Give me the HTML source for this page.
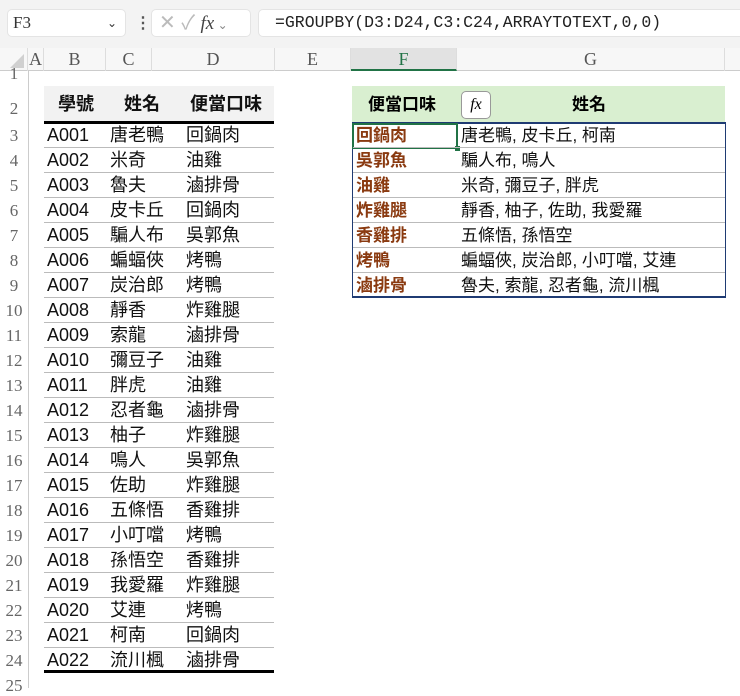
<!DOCTYPE html>
<html><head><meta charset="utf-8"><style>
*{margin:0;padding:0;box-sizing:border-box}
body{width:740px;height:688px;overflow:hidden;background:#fff;font-family:"Liberation Sans","Noto Sans CJK TC",sans-serif;position:relative}
.a{position:absolute}
.top{left:0;top:0;width:740px;height:48px;background:#f3f3f3}
.box{background:#fff;border-radius:5px;border:1px solid #e4e4e4}
.ch{top:48px;height:23px;font-family:"Liberation Serif",serif;font-size:18px;color:#555;text-align:center;line-height:23px;border-right:1px solid #ddd}
.rh{left:0;width:28px;text-align:center;font-family:"Liberation Serif",serif;font-size:17px;color:#666}
.c{font-size:18px;color:#111;white-space:nowrap;line-height:25px}
.hl{height:1px;background:#bbb}
.f{color:#8a3a10;font-weight:bold;font-size:17px;left:356px;line-height:25px}
.g{font-size:17px;left:461px;line-height:25px;color:#111;white-space:nowrap}
</style></head><body>
<div class="a top"></div>
<div class="a box" style="left:7px;top:9px;width:119px;height:28px;font-family:'Liberation Serif',serif;font-size:17px;line-height:26px;padding-left:5px;color:#333">F3<span style="position:absolute;right:8px;font-size:12px">&#8964;</span></div>
<div class="a" style="left:135px;top:13px;font-size:16px;color:#555;font-weight:bold">&#8942;</div>
<div class="a box" style="left:151px;top:9px;width:100px;height:28px;color:#bbb;font-size:20px;line-height:26px;padding-left:7px">✕ ✓ <i style="font-family:'Liberation Serif',serif;color:#444;font-size:19px">fx</i><span style="font-size:12px;color:#888"> &#8964;</span></div>
<div class="a box" style="left:258px;top:9px;width:490px;height:28px;font-family:'Liberation Mono',monospace;font-size:16.5px;line-height:26px;padding-left:16px;color:#222">=GROUPBY(D3:D24,C3:C24,ARRAYTOTEXT,0,0)</div>
<div class="a" style="left:0;top:48px;width:740px;height:23px;background:#f7f7f7;border-bottom:1px solid #ccc"></div>
<div class="a" style="left:0;top:48px;width:28px;height:23px;border-right:1px solid #ddd"><div style="position:absolute;right:3px;bottom:3px;width:0;height:0;border-left:14px solid transparent;border-bottom:14px solid #d0d0d0"></div></div>
<div class="a ch" style="left:28px;width:16px">A</div>
<div class="a ch" style="left:44px;width:62px">B</div>
<div class="a ch" style="left:106px;width:46px">C</div>
<div class="a ch" style="left:152px;width:123px">D</div>
<div class="a ch" style="left:275px;width:76px">E</div>
<div class="a ch" style="left:351px;width:106px;background:#e2e2e2;color:#217346;border-bottom:2px solid #217346">F</div>
<div class="a ch" style="left:457px;width:268px">G</div>
<div class="a" style="left:28px;top:71px;width:1px;height:617px;background:#ccc"></div>
<div class="a rh" style="top:64px">1</div>
<div class="a rh" style="top:99px">2</div>
<div id="rows"></div>
<div class="a" style="left:44px;top:86px;width:230px;height:36px;background:#f2f2f2"></div>
<div class="a c" style="left:58px;top:92px;font-weight:bold">學號</div>
<div class="a c" style="left:124px;top:92px;font-weight:bold">姓名</div>
<div class="a c" style="left:190px;top:92px;font-weight:bold">便當口味</div>
<div class="a" style="left:44px;top:121px;width:230px;height:3px;background:#000"></div>
<div class="a" style="left:44px;top:670px;width:230px;height:3px;background:#000"></div>
<div class="a" style="left:352px;top:86px;width:373px;height:37px;background:#d9efd0"></div>
<div class="a" style="left:368px;top:92px;font-size:17px;font-weight:bold;line-height:25px">便當口味</div>
<div class="a" style="left:572px;top:92px;font-size:17px;font-weight:bold;line-height:25px">姓名</div>
<div class="a" style="left:461px;top:91px;width:30px;height:28px;background:#fff;border:1px solid #999;border-radius:5px;font-family:'Liberation Serif',serif;font-style:italic;font-size:16px;text-align:center;line-height:26px">fx</div>
<div class="a" style="left:352px;top:122px;width:374px;height:176px;border:1px solid #1f3b73;border-top-width:2px;border-bottom-width:2px"></div>
<div class="a" style="left:352px;top:123px;width:106px;height:26px;border:2px solid #217346"></div>
<div class="a" style="left:455px;top:146px;width:5px;height:5px;background:#217346"></div>
<div id="r2"></div>
<script>
var d=[["A001","唐老鴨","回鍋肉"],["A002","米奇","油雞"],["A003","魯夫","滷排骨"],["A004","皮卡丘","回鍋肉"],["A005","騙人布","吳郭魚"],["A006","蝙蝠俠","烤鴨"],["A007","炭治郎","烤鴨"],["A008","靜香","炸雞腿"],["A009","索龍","滷排骨"],["A010","彌豆子","油雞"],["A011","胖虎","油雞"],["A012","忍者龜","滷排骨"],["A013","柚子","炸雞腿"],["A014","鳴人","吳郭魚"],["A015","佐助","炸雞腿"],["A016","五條悟","香雞排"],["A017","小叮噹","烤鴨"],["A018","孫悟空","香雞排"],["A019","我愛羅","炸雞腿"],["A020","艾連","烤鴨"],["A021","柯南","回鍋肉"],["A022","流川楓","滷排骨"]];
var h="";
for(var i=0;i<22;i++){var t=123+i*25;
h+='<div class="a rh" style="top:'+(t+3)+'px">'+(i+3)+'</div>';
h+='<div class="a c" style="left:47px;top:'+t+'px">'+d[i][0]+'</div><div class="a c" style="left:110px;top:'+t+'px">'+d[i][1]+'</div><div class="a c" style="left:186px;top:'+t+'px">'+d[i][2]+'</div>';
if(i<21)h+='<div class="a hl" style="left:44px;top:'+(t+24)+'px;width:230px"></div>';}
h+='<div class="a rh" style="top:676px">25</div>';
document.getElementById("rows").innerHTML=h;
var g=[["回鍋肉","唐老鴨, 皮卡丘, 柯南"],["吳郭魚","騙人布, 鳴人"],["油雞","米奇, 彌豆子, 胖虎"],["炸雞腿","靜香, 柚子, 佐助, 我愛羅"],["香雞排","五條悟, 孫悟空"],["烤鴨","蝙蝠俠, 炭治郎, 小叮噹, 艾連"],["滷排骨","魯夫, 索龍, 忍者龜, 流川楓"]];
h="";
for(var i=0;i<7;i++){var t=123+i*25;
h+='<div class="a f" style="top:'+t+'px">'+g[i][0]+'</div><div class="a g" style="top:'+t+'px">'+g[i][1]+'</div>';
if(i<6)h+='<div class="a hl" style="left:353px;top:'+(t+24)+'px;width:372px"></div>';}
document.getElementById("r2").innerHTML=h;
</script>
</body></html>
